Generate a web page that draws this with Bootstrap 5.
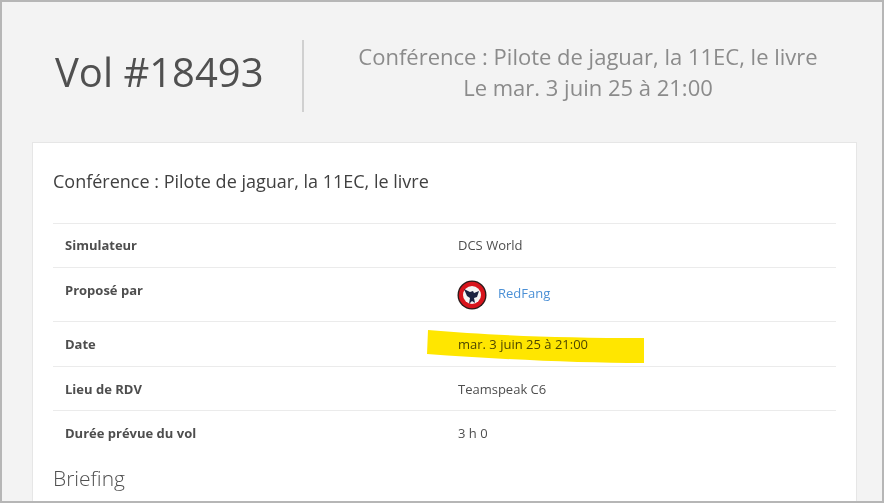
<!DOCTYPE html>
<html lang="fr">
<head>
  <meta charset="UTF-8" />
  <meta name="viewport" content="width=device-width, initial-scale=1" />
  <title>Vol #18493</title>
  <link href="https://cdn.jsdelivr.net/npm/bootstrap@5.3.0/dist/css/bootstrap.min.css" rel="stylesheet" />
  <style>
    html, body {
      height: 100%;
      margin: 0;
      overflow: hidden;
      background: #f3f3f3;
      font-family: "Open Sans", "Liberation Sans", sans-serif;
      color: #4e4e4e;
    }
    .page-frame {
      height: 503px;
      border: 2px solid #b6b6b6;
      overflow: hidden;
      padding: 0 25px 0 30px;
    }
    .flight-head {
      height: 140px;
      padding-top: 38px;
    }
    .flight-id {
      flex: none;
      box-sizing: content-box;
      height: 72px;
      width: 247px;
      padding-left: 23px;
      font-size: 40px;
      line-height: 64px;
      font-weight: 400;
      color: #505050;
      border-right: 2px solid #d0d0d0;
      margin: 0;
    }
    .flight-sub {
      width: 568px;
      flex: none;
      font-size: 22px;
      line-height: 31px;
      color: #8b8b8b;
      text-align: center;
      padding-top: 1px;
    }
    .flight-card {
      width: 825px;
      height: 400px;
      background: #fff;
      border: 1px solid #e6e6e6;
      border-bottom: 0;
      border-radius: 0;
      padding: 24px 20px 0;
    }
    .flight-title {
      font-size: 18px;
      line-height: 28px;
      font-weight: 400;
      color: #404040;
      margin-bottom: 28px;
    }
    .info-table {
      font-size: 13px;
      margin-bottom: 0;
      table-layout: fixed;
      border-top: 1px solid #ebebeb;
      --bs-table-color: #4e4e4e;
      --bs-table-border-color: #ebebeb;
    }
    .info-table th, .info-table td {
      padding: 13px 12px 13px;
      line-height: 17px;
      height: 44px;
    }
    .info-table th { font-weight: 700; width: 393px; }
    .info-table tr:last-child th, .info-table tr:last-child td { border-bottom: 0; }
    .info-table .pilot-row th { padding-top: 14px; }
    .info-table .pilot-row td { padding: 12px 12px 11px; height: 54px; }
    .info-table .low-row th, .info-table .low-row td { padding: 14px 12px 12px; }
    .info-table .date-row th, .info-table .date-row td { padding: 14px 12px 13px; height: 45px; }
    .pilot-link { color: #4b90d6; text-decoration: none; margin-top: -4px; }
    .pilot-logo { width: 30px; height: 30px; margin: 0 11px 0 -1px; flex: none; }
    .date-cell { position: relative; }
    .marker {
      position: absolute;
      left: -20px;
      top: 6px;
      width: 220px;
      height: 38px;
      mix-blend-mode: multiply;
      pointer-events: none;
    }
    .briefing-title {
      font-size: 21px;
      line-height: 28px;
      font-weight: 300;
      color: #505050;
      margin: 9px 0 0;
    }
  </style>
</head>
<body>
  <div class="page-frame">
    <div class="flight-head d-flex">
      <h1 class="flight-id">Vol #18493</h1>
      <div class="flight-sub">Conférence : Pilote de jaguar, la 11EC, le livre<br />Le mar. 3 juin 25 à 21:00</div>
    </div>
    <div class="flight-card">
      <h2 class="flight-title">Conférence : Pilote de jaguar, la 11EC, le livre</h2>
      <table class="table info-table">
        <tbody>
          <tr><th>Simulateur</th><td>DCS World</td></tr>
          <tr class="pilot-row">
            <th>Proposé par</th>
            <td>
              <div class="d-flex align-items-center">
                <svg class="pilot-logo" viewBox="0 0 30 30" aria-hidden="true">
                  <circle cx="15" cy="15" r="14.5" fill="#2a1a1a" />
                  <circle cx="15" cy="15" r="13.2" fill="#d8141c" />
                  <circle cx="15" cy="15" r="9" fill="#f4f4f4" />
                  <path d="M7 9l6 3 3-1 1 2 5-2-2 6-3 1 1 5-3-2-3 3 1-6-3-2z" fill="#1b2140" />
                </svg>
                <a class="pilot-link" href="#">RedFang</a>
              </div>
            </td>
          </tr>
          <tr class="date-row">
            <th>Date</th>
            <td class="date-cell">mar. 3 juin 25 à 21:00
              <svg class="marker" viewBox="0 0 220 38" aria-hidden="true">
                <path d="M2 2 C60 7 130 10 218 10 L218 35 C150 35 70 31 1 26 Z" fill="#ffe600" />
              </svg>
            </td>
          </tr>
          <tr class="low-row"><th>Lieu de RDV</th><td>Teamspeak C6</td></tr>
          <tr class="low-row"><th>Durée prévue du vol</th><td>3 h 0</td></tr>
        </tbody>
      </table>
      <h3 class="briefing-title">Briefing</h3>
    </div>
  </div>
  <script src="https://cdn.jsdelivr.net/npm/bootstrap@5.3.0/dist/js/bootstrap.bundle.min.js"></script>
</body>
</html>
